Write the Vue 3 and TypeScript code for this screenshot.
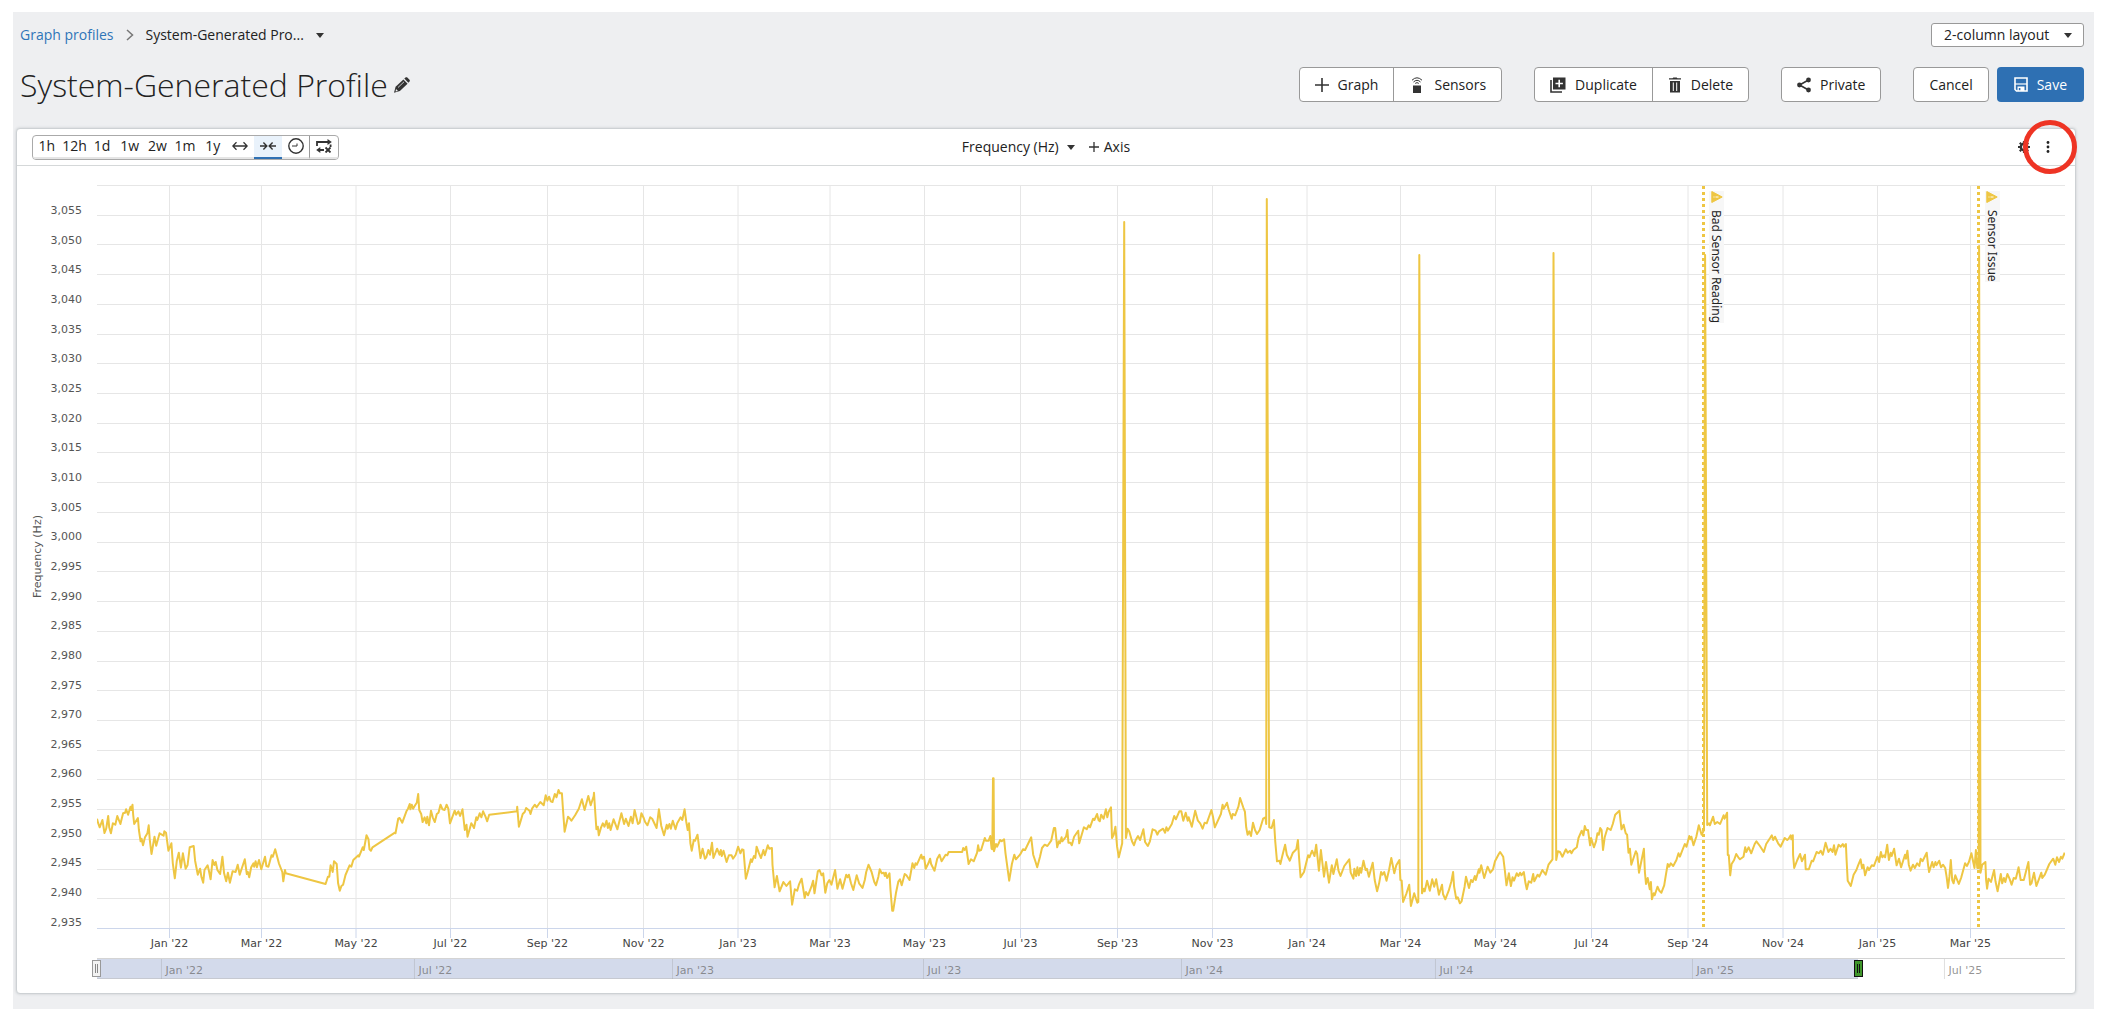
<script setup lang="ts">
import { ref } from 'vue'

const PLOT_W = 1968
const PLOT_H = 743

interface Chunk {
  start: number
  scale: number
  points: string
}

// Samples are stored in quarters of the time range; x counts from the start of each quarter.
const chunks: Chunk[] = [
  {
    start: -97,
    scale: 2.958,
    points:
      '287,236 290,248 295,262 303,240 309,279 314,266 320,228 323,262 328,280 334,250 341,254 347,228 356,252 364,220 370,218 373,208 379,224 386,200 388,210 392,194 394,225 397,252 408,234 411,270 416,304 419,296 423,316 429,292 436,280 440,256 443,300 448,342 457,290 462,317 472,280 484,287 486,274 491,278 498,332 507,310 511,370 517,415 523,362 529,338 535,383 541,340 549,386 555,375 561,322 573,318 577,362 585,404 592,386 596,412 601,428 605,390 614,376 618,392 623,418 629,360 634,375 638,366 643,390 651,402 658,350 663,400 669,424 674,398 680,428 688,394 697,396 703,374 709,404 724,358 730,402 733,396 737,412 743,382 750,370 752,380 756,364 760,382 766,360 773,388 784,350 788,378 794,380 803,346 807,350 814,328 825,370 835,396 838,424 843,390 845,400 963,432 970,410 974,410 978,376 984,396 988,364 996,372 1000,430 1005,452 1010,438 1015,434 1022,405 1034,376 1039,380 1045,360 1060,346 1062,350 1073,322 1076,330 1084,286 1090,298 1093,328 1097,332 1102,322 1168,278 1170,280 1178,236 1182,234 1190,248 1202,214 1207,206 1212,192 1214,208 1218,194 1222,206 1228,196 1233,188 1237,162 1240,210 1246,222 1250,246 1256,232 1261,250 1264,230 1269,256 1275,212 1280,232 1286,246 1292,222 1297,218 1303,194 1309,208 1315,210 1321,194 1326,206 1331,250 1345,212 1349,224 1356,214 1361,228 1368,208 1375,270 1380,254 1383,290 1394,250 1398,256 1402,264 1409,232 1412,240 1419,220 1424,232 1429,214 1436,230 1441,244 1447,224 1529,214 1530,200 1535,260',
  },
  {
    start: 423,
    scale: 2.958,
    points:
      '0,250 8,222 14,216 18,204 28,212 31,222 36,205 44,194 49,202 60,186 70,196 76,166 81,182 86,170 91,184 96,186 103,162 108,172 114,150 118,160 124,160 127,205 132,275 142,230 148,236 152,242 163,226 174,206 183,178 191,210 202,168 209,196 218,168 219,158 222,210 226,268 230,260 233,286 240,262 245,250 250,260 256,242 260,264 264,250 268,270 277,238 288,268 300,220 308,252 313,236 321,258 328,230 333,250 339,210 349,252 354,248 359,220 366,234 370,246 377,256 385,232 391,236 404,264 411,208 418,258 426,286 434,254 437,266 442,252 446,266 452,242 460,268 465,250 475,232 480,240 487,208 492,246 496,270 500,250 504,310 508,332 514,300 518,302 525,284 534,354 540,326 547,356 551,352 557,330 562,344 568,308 572,354 583,326 590,344 594,330 597,348 602,332 611,366 618,346 626,346 630,356 638,344 645,320 652,340 657,328 661,330 668,416 673,398 683,358 686,366 692,348 696,354 700,320 706,338 713,354 720,330 724,346 733,316 737,326 745,324 747,375 753,442 760,408 768,454 779,426 788,438 799,424 805,494 813,448 820,452 825,434 833,416 842,474 846,456 852,466 862,440 867,422 871,460 881,394 886,390 892,406 897,400 903,458 909,430 915,420 921,434 932,390 939,446 947,418 954,446 965,404 969,412 973,404 979,430 986,450 996,406 1003,430 1013,444 1020,420 1024,396 1031,374 1040,396 1048,426 1053,436 1060,410 1064,388 1070,400 1076,398 1079,408 1082,398 1086,414 1093,400 1096,450 1101,512 1104,512 1112,460 1119,425 1124,418 1129,436 1138,402 1143,406 1152,420 1161,370 1166,384 1170,370 1174,374 1187,344 1190,356 1195,350 1200,386 1208,370 1213,356 1216,372 1226,392 1234,356 1241,344 1247,364 1259,344 1264,346 1268,336 1308,336 1311,324 1315,330 1320,320 1327,372 1334,358 1342,364 1352,338 1355,316 1358,332 1364,330 1375,294 1378,302 1386,302 1391,288 1395,326 1397,328 1399,115 1401,115 1402,334 1408,312 1411,320 1416,310 1420,300 1425,304 1432,298 1436,340 1447,422 1455,372 1462,344 1467,358 1479,344 1488,328 1494,330 1512,292 1518,344 1524,362 1530,382',
  },
  {
    start: 943,
    scale: 2.958,
    points:
      '0,350 6,324 14,314 22,318 33,302 41,264 45,264 51,322 56,304 59,310 64,292 66,304 77,290 81,270 84,308 90,308 94,316 101,290 113,272 116,310 130,262 138,268 144,256 148,262 157,236 161,240 169,222 173,240 177,244 181,224 188,236 195,208 199,232 203,216 210,202 213,294 218,284 223,260 228,320 233,352 243,310 249,-1554 254,294 259,266 264,274 272,304 278,316 283,300 290,288 296,300 306,268 311,306 319,318 325,304 333,268 342,272 347,284 352,274 364,266 370,278 374,262 378,272 390,252 397,228 402,238 412,214 418,214 424,242 431,218 437,242 440,232 449,260 459,212 467,242 474,250 481,266 487,248 493,250 507,210 512,232 517,262 535,222 540,194 543,206 553,188 558,208 567,236 570,222 577,226 587,200 592,174 601,202 606,215 610,262 614,284 619,274 624,288 630,248 636,270 642,282 650,270 660,236 667,232 669,252 671,-1623 678,262 685,264 692,240 696,306 701,364 708,362 711,372 716,350 725,314 730,344 739,362 748,338 758,328 763,300 766,350 771,412 781,396 793,346 797,352 805,332 812,348 817,314 825,392 831,330 840,410 846,366 855,428 863,376 868,402 878,358 883,392 889,408 900,378 915,358 919,398 927,416 930,386 935,408 939,382 943,406 947,384 950,398 957,362 963,390 967,386 973,410 984,368 990,420 997,454 1003,430 1009,396 1013,404 1018,396 1025,422 1033,388 1039,354 1048,400 1054,376 1063,360 1066,420 1070,422 1074,486 1084,460 1092,434 1097,498 1107,460 1116,488 1119,486 1122,-1455 1130,460 1135,446 1138,454 1145,422 1153,452 1160,418 1166,440 1172,418 1180,464 1189,434 1192,462 1199,478 1209,452 1217,424 1222,396 1225,440 1231,476 1236,472 1242,490 1247,484 1256,440 1260,410 1269,444 1275,420 1280,426 1286,408 1289,420 1298,388 1300,398 1305,376 1314,414 1324,380 1332,398 1340,388 1346,364 1357,342 1361,336 1370,350 1375,390 1380,436 1387,400 1393,438 1398,412 1402,422 1410,400 1415,408 1420,398 1424,406 1431,396 1436,430 1440,448 1446,424 1453,428 1459,402 1462,424 1472,404 1477,410 1486,390 1496,404 1504,374 1516,358 1519,-1461 1527,360 1532,334',
  },
  {
    start: 1463,
    scale: 2.861,
    points:
      '0,336 7,350 17,328 22,338 29,332 33,340 38,330 48,322 53,294 62,272 67,286 71,258 75,270 80,270 86,316 89,294 97,322 103,304 107,280 111,284 115,264 119,270 123,330 128,292 136,264 145,270 151,252 158,224 170,212 176,268 182,254 188,280 192,284 196,338 200,326 204,374 217,334 221,342 226,398 240,326 243,396 246,432 251,414 257,448 260,426 263,478 268,460 271,466 279,440 284,452 290,458 298,436 302,410 308,372 312,380 317,370 324,378 333,360 339,340 343,350 357,312 362,320 370,288 373,298 376,290 382,316 390,290 397,256 405,284 412,270 415,-1455 421,255 427,250 429,256 438,230 443,252 450,246 458,252 468,226 471,236 478,218 480,345 483,346 487,406 491,372 498,360 504,342 510,352 515,358 525,350 530,322 533,336 540,322 547,340 557,312 562,304 572,318 583,336 590,312 596,302 601,294 606,286 610,300 615,290 624,310 631,320 643,294 650,300 654,296 660,286 662,298 666,286 667,345 670,384 679,360 687,342 692,364 701,344 703,388 712,388 720,362 724,364 734,336 741,340 746,332 752,344 760,308 768,336 774,326 780,336 784,316 788,344 797,314 803,320 809,312 812,320 818,312 820,360 823,422 832,438 840,404 848,390 853,376 860,358 864,384 868,374 873,406 880,382 884,390 892,376 898,378 908,350 913,366 918,336 922,352 927,346 930,352 936,314 941,360 946,338 949,348 956,326 963,376 970,356 976,382 987,344 990,356 994,332 998,374 1003,392 1010,374 1015,384 1022,370 1028,378 1032,356 1037,364 1049,338 1053,376 1056,396 1065,366 1069,382 1074,366 1077,376 1085,362 1090,382 1096,374 1102,384 1106,410 1110,444 1114,410 1118,360 1122,420 1126,430 1131,406 1141,432 1148,412 1159,370 1164,378 1170,366 1177,340 1186,384 1190,330 1194,384 1198,384 1199,-1482 1203,398 1208,374 1217,366 1219,420 1222,446 1226,416 1233,426 1242,390 1246,424 1252,454 1261,402 1265,430 1270,414 1274,426 1280,402 1286,416 1292,434 1298,414 1304,416 1312,382 1318,420 1327,420 1340,366 1345,434 1349,430 1356,398 1363,438 1372,412 1377,398 1380,414 1387,404 1400,372 1411,356 1417,374 1422,352 1428,366 1433,350 1437,356 1444,338',
  },
]

const linePoints = chunks
  .flatMap((c) =>
    c.points.split(' ').map((p) => {
      const [x, y] = p.split(',').map(Number)
      return `${(c.start + x / c.scale).toFixed(1)},${(555 + y / 3).toFixed(1)}`
    }),
  )
  .join(' ')

const pct = (x: number) => `${((x / PLOT_W) * 100).toFixed(3)}%`

const yLabels = Array.from({ length: 25 }, (_, i) => (3055 - i * 5).toLocaleString('en-US'))
const gridRows = Array.from({ length: 25 }, (_, i) => 0.5 + Math.round(i * 29.72))

const months: { x: number; label: string }[] = [
  { x: 72.5, label: "Jan '22" },
  { x: 164.5, label: "Mar '22" },
  { x: 259, label: "May '22" },
  { x: 353.5, label: "Jul '22" },
  { x: 450.5, label: "Sep '22" },
  { x: 546.5, label: "Nov '22" },
  { x: 641, label: "Jan '23" },
  { x: 733, label: "Mar '23" },
  { x: 827.5, label: "May '23" },
  { x: 923.5, label: "Jul '23" },
  { x: 1020.5, label: "Sep '23" },
  { x: 1115.5, label: "Nov '23" },
  { x: 1210, label: "Jan '24" },
  { x: 1303.5, label: "Mar '24" },
  { x: 1398.5, label: "May '24" },
  { x: 1494.5, label: "Jul '24" },
  { x: 1591, label: "Sep '24" },
  { x: 1686, label: "Nov '24" },
  { x: 1780.5, label: "Jan '25" },
  { x: 1873.5, label: "Mar '25" },
]

const navTicks: { x: number; label: string }[] = [
  { x: 64.5, label: "Jan '22" },
  { x: 317.5, label: "Jul '22" },
  { x: 575.5, label: "Jan '23" },
  { x: 826.5, label: "Jul '23" },
  { x: 1084.5, label: "Jan '24" },
  { x: 1338.5, label: "Jul '24" },
  { x: 1595.5, label: "Jan '25" },
  { x: 1847.5, label: "Jul '25" },
]

const events = [
  { x: 1606.5, label: 'Bad Sensor Reading' },
  { x: 1881.5, label: 'Sensor Issue' },
]

const ranges = ['1h', '12h', '1d', '1w', '2w', '1m', '1y']
const layout = ref('2-column layout')
</script>

<template>
  <main class="page">
    <div class="top-row">
      <nav class="crumbs" aria-label="Breadcrumb">
        <a href="#">Graph profiles</a>
        <svg width="8" height="14" viewBox="0 0 8 14"><path d="M1 2l5.500 5L1 12" fill="none" stroke="#777" stroke-width="1.500" /></svg>
        <button type="button" class="plain crumb-current">
          System-Generated Pro...
          <svg width="8" height="5" viewBox="0 0 8 5"><path d="M0 0h8L4 5z" fill="#333" /></svg>
        </button>
      </nav>
      <div class="select-wrap">
        <select v-model="layout" aria-label="Layout">
          <option>2-column layout</option>
        </select>
        <svg width="8" height="5" viewBox="0 0 8 5"><path d="M0 0h8L4 5z" fill="#333" /></svg>
      </div>
    </div>

    <div class="title-row">
      <h1>System-Generated Profile</h1>
      <button type="button" class="plain edit" aria-label="Edit name">
        <svg width="16" height="16" viewBox="0 0 16 16" fill="#333">
          <path d="M1.600 9.800L9.400 2.400l4.200 4.300-7.700 7.400L0 15.800z" />
          <path d="M10.300 1.600l1.200-1.100c.5-.5 1.300-.5 1.800 0L15.500 2.700c.5.5.5 1.300 0 1.800L14.400 5.700z" />
          <path d="M2 12l2 2-2.400.5z" fill="#eeeff1" />
          <path d="M4 10.500L10 4.800" stroke="#eeeff1" stroke-width="0.800" />
        </svg>
      </button>
      <div class="actions">
        <div class="group">
          <button type="button">
            <svg width="14" height="14" viewBox="0 0 14 14"><path d="M7 0v14M0 7h14" stroke="#333" stroke-width="1.600" /></svg>
            Graph
          </button>
          <button type="button">
            <svg width="16" height="16" viewBox="-2 0 16 16">
              <rect x="2" y="8.500" width="8" height="7.500" fill="#333" />
              <path d="M1 3.200Q6-1.600 11 3.200M2.500 5Q6 1.600 9.500 5M4.200 6.400Q6 4.800 7.800 6.400" fill="none" stroke="#333" stroke-width="1" />
            </svg>
            Sensors
          </button>
        </div>
        <div class="group">
          <button type="button">
            <svg width="16" height="16" viewBox="0 0 16 16">
              <path d="M1 3v12h11" fill="none" stroke="#333" stroke-width="1.600" />
              <rect x="3" y="0.500" width="12.500" height="12" fill="#333" />
              <path d="M9.200 2.800v7.400M5.500 6.500h7.400" stroke="#fff" stroke-width="1.600" />
            </svg>
            Duplicate
          </button>
          <button type="button">
            <svg width="14" height="16" viewBox="-1 0 14 16">
              <path d="M0 1.200h3.500L4.300.4h3.400l.8.800H12v1.400H0zM1 4h10v11.500H1z" fill="#333" />
              <path d="M4.300 5.500v8.500M7.700 5.500v8.500" stroke="#fff" stroke-width="1" />
            </svg>
            Delete
          </button>
        </div>
        <div class="group">
          <button type="button">
            <svg width="14" height="16" viewBox="0 0 14 16">
              <path d="M11.500 3L2.500 8l9 5" fill="none" stroke="#333" stroke-width="1.600" />
              <circle cx="11.500" cy="3" r="2.400" fill="#333" /><circle cx="2.500" cy="8" r="2.400" fill="#333" /><circle cx="11.500" cy="13" r="2.400" fill="#333" />
            </svg>
            Private
          </button>
        </div>
        <div class="pair">
          <div class="group"><button type="button">Cancel</button></div>
          <button type="button" class="save">
            <svg width="14" height="15" viewBox="0 0 14 15">
              <path d="M1 1h12v13H2.500L1 12.500z" fill="none" stroke="#fff" stroke-width="1.600" />
              <path d="M1 7h12" stroke="#fff" stroke-width="1.200" />
              <path d="M3.500 9.500h7V14h-7z" fill="#fff" />
              <path d="M4.800 11h1.600v2.200H4.800z" fill="#2e70b3" />
            </svg>
            Save
          </button>
        </div>
      </div>
    </div>

    <section class="card">
      <header class="card-head">
        <div class="ranges">
          <button v-for="r in ranges" :key="r" type="button">{{ r }}</button>
          <button type="button" aria-label="Expand range">
            <svg width="16" height="10" viewBox="0 0 16 10"><path d="M1 5h14M4.500 1.200L.8 5l3.700 3.800M11.500 1.200L15.200 5l-3.700 3.800" fill="none" stroke="#333" stroke-width="1.300" /></svg>
          </button>
          <button type="button" class="active" aria-label="Fit range">
            <svg width="16" height="10" viewBox="0 0 16 10"><path d="M0 5h6.500M9.500 5H16M3.400 1.600L6.800 5 3.400 8.400M12.600 1.600L9.200 5l3.400 3.400" fill="none" stroke="#333" stroke-width="1.400" /></svg>
          </button>
          <button type="button" aria-label="Pick time">
            <svg width="16" height="16" viewBox="0 0 16 16"><circle cx="8" cy="8" r="7.200" fill="none" stroke="#333" stroke-width="1.400" /><path d="M4 8h5V5.500" fill="none" stroke="#333" stroke-width="1" /></svg>
          </button>
          <button type="button" class="last" aria-label="Reset sync">
            <svg width="16" height="14" viewBox="0 0 16 14">
              <path d="M1 7V3h12" fill="none" stroke="#333" stroke-width="1.800" />
              <path d="M11.500 0L15.800 3l-4.300 3z" fill="#333" />
              <path d="M3 11h5M14.600 5.500V8" stroke="#333" stroke-width="1.800" />
              <path d="M4.300 8L.2 11l4.100 3z" fill="#333" />
              <path d="M9.500 8.500l5 5M14.500 8.500l-5 5" stroke="#333" stroke-width="1.800" />
            </svg>
          </button>
        </div>
        <div class="axis-tools">
          <button type="button" class="plain">
            Frequency (Hz)
            <svg width="8" height="5" viewBox="0 0 8 5"><path d="M0 0h8L4 5z" fill="#333" /></svg>
          </button>
          <button type="button" class="plain add-axis">
            <svg width="10" height="10" viewBox="0 0 10 10"><path d="M5 0v10M0 5h10" stroke="#333" stroke-width="1.300" /></svg>
            Axis
          </button>
        </div>
        <div class="card-tools">
          <button type="button" class="plain" aria-label="Settings">
            <svg width="12" height="12" viewBox="0 0 12 12">
              <circle cx="6" cy="6" r="3.200" fill="none" stroke="#333" stroke-width="2.400" />
              <path d="M6 0v2M6 10v2M0 6h2M10 6h2M1.800 1.800l1.400 1.400M8.800 8.800l1.400 1.400M10.200 1.800L8.800 3.200M3.200 8.800l-1.400 1.400" stroke="#333" stroke-width="2.200" />
            </svg>
          </button>
          <button type="button" class="plain more" aria-label="More">
            <svg width="4" height="12" viewBox="0 0 4 12" fill="#222"><circle cx="2" cy="1.500" r="1.400" /><circle cx="2" cy="6" r="1.400" /><circle cx="2" cy="10.500" r="1.400" /></svg>
            <span class="ring"></span>
          </button>
        </div>
      </header>

      <div class="chart">
        <div class="axis-title">Frequency (Hz)</div>
        <div class="y-axis"><span v-for="l in yLabels" :key="l">{{ l }}</span></div>
        <div class="plot-col">
          <div class="plot">
            <svg class="plot-svg" :viewBox="`0 0 ${PLOT_W} ${PLOT_H}`" preserveAspectRatio="none">
              <g stroke="#e6e6e6" stroke-width="1">
                <line v-for="y in gridRows" :key="`r${y}`" x1="0" :x2="PLOT_W" :y1="y" :y2="y" vector-effect="non-scaling-stroke" />
                <line v-for="m in months" :key="m.label" :x1="m.x" :x2="m.x" y1="0" :y2="PLOT_H" vector-effect="non-scaling-stroke" />
              </g>
              <polyline :points="linePoints" fill="none" stroke="#eec643" stroke-width="2" stroke-linejoin="round" vector-effect="non-scaling-stroke" />
              <line v-for="e in events" :key="e.label" :x1="e.x" :x2="e.x" y1="1" :y2="PLOT_H" stroke="#eec643" stroke-width="3" stroke-dasharray="3 3" vector-effect="non-scaling-stroke" />
            </svg>
            <div v-for="e in events" :key="e.label" class="event" :style="{ left: pct(e.x) }">
              <svg width="12" height="12" viewBox="0 0 12 12"><path d="M.8.500L11.200 6 .8 11.500z" fill="#eec643" stroke="#eec643" stroke-linejoin="round" /><path d="M2.500 6h1M4.500 6h3" stroke="#fff" stroke-width="1" /></svg>
              <span>{{ e.label }}</span>
            </div>
          </div>
          <svg class="x-axis" width="100%" height="30">
            <line x1="0" x2="100%" y1="0.500" y2="0.500" stroke="#ccd6eb" />
            <g v-for="m in months" :key="m.label">
              <line :x1="pct(m.x)" :x2="pct(m.x)" y1="0" y2="10" stroke="#ccd6eb" />
              <text :x="pct(m.x)" y="19" text-anchor="middle">{{ m.label }}</text>
            </g>
          </svg>
          <div class="navigator">
            <div class="selected">
              <span class="handle start"></span>
              <span class="handle end"></span>
            </div>
            <svg width="100%" height="20">
              <g v-for="t in navTicks" :key="t.label">
                <line :x1="pct(t.x)" :x2="pct(t.x)" y1="0" y2="20" stroke="#999" stroke-opacity="0.300" />
                <text :x="pct(t.x)" y="15" dx="4">{{ t.label }}</text>
              </g>
            </svg>
          </div>
        </div>
      </div>
    </section>
  </main>
</template>

<style>
body {
  background: #fff;
}
</style>

<style scoped>
.page {
  margin: 12px 14px 12px 13px;
  padding: 11px 10px 15px 7px;
  background: #eeeff1;
  font-family: 'Open Sans', 'Noto Sans', sans-serif;
  font-size: 14px;
  line-height: 20px;
  color: #222;
}
* {
  box-sizing: border-box;
}
svg {
  display: block;
  flex: none;
}
button,
select {
  font: inherit;
  color: inherit;
  margin: 0;
}
.plain {
  display: flex;
  align-items: center;
  padding: 0;
  border: 0;
  background: none;
}
.top-row,
.title-row {
  display: flex;
  align-items: center;
}
.top-row {
  justify-content: space-between;
}
.crumbs {
  display: flex;
  align-items: center;
  gap: 12px;
}
.crumbs a {
  color: #2e75b8;
  text-decoration: none;
}
.crumb-current {
  gap: 12px;
}
.select-wrap {
  position: relative;
}
.select-wrap select {
  display: block;
  width: 153px;
  height: 24px;
  padding: 0 12px;
  appearance: none;
  border: 1px solid #999;
  border-radius: 3px;
  background: #fff;
}
.select-wrap svg {
  position: absolute;
  right: 12px;
  top: 10px;
  pointer-events: none;
}
.title-row {
  margin-top: 20px;
}
h1 {
  margin: 0;
  font-weight: 300;
  font-size: 32px;
  line-height: 34px;
}
.edit {
  margin-left: 6px;
}
.actions {
  display: flex;
  gap: 32px;
  margin-left: auto;
}
.pair {
  display: flex;
  gap: 8px;
}
.group {
  display: flex;
  border: 1px solid #999;
  border-radius: 4px;
  background: #fff;
  overflow: hidden;
}
.group button,
.save {
  display: flex;
  align-items: center;
  gap: 9px;
  padding: 0 15px;
  border: 0;
  background: none;
}
.group button {
  height: 33px;
}
.group button + button {
  border-left: 1px solid #999;
}
.save {
  padding: 0 17px;
  border-radius: 4px;
  background: #2e70b3;
  color: #fff;
}
.card {
  margin: 26px 8px 0 -4px;
  border: 1px solid #cdd1d4;
  border-radius: 4px;
  background: #fff;
  box-shadow: 0 0 3px #c5cacd;
}
.card-head {
  display: grid;
  grid-template-columns: 1fr auto 1fr;
  align-items: center;
  height: 37px;
  padding: 0 15px;
  border-bottom: 1px solid #d5d8d9;
}
.ranges {
  display: flex;
  width: 307px;
  height: 25px;
  border: 1px solid #aaa;
  border-radius: 4px;
  overflow: hidden;
}
.ranges button {
  display: flex;
  flex: 1 1 0;
  align-items: center;
  justify-content: center;
  min-width: 0;
  padding: 0;
  border: 0;
  border-bottom: 2px solid #e5e5e5;
  background: none;
}
.ranges .active {
  border-color: #2e70b3;
  background: #e9f2fb;
}
.ranges .last {
  border-left: 1px solid #999;
}
.axis-tools {
  display: flex;
  gap: 14px;
}
.axis-tools .plain {
  gap: 8px;
}
.axis-tools .add-axis {
  gap: 5px;
}
.card-tools {
  display: flex;
  justify-content: flex-end;
  gap: 16px;
  padding-right: 10px;
}
.more {
  position: relative;
}
.ring {
  position: absolute;
  left: -23px;
  top: -21px;
  width: 54px;
  height: 54px;
  border: 5px solid #ee3424;
  border-radius: 50%;
}
.chart {
  display: flex;
  padding: 19px 10px 14px 14px;
}
.axis-title,
.y-axis,
.x-axis text,
.navigator text {
  font-family: 'DejaVu Sans', sans-serif;
  font-size: 11px;
}
.axis-title {
  display: flex;
  align-items: center;
  justify-content: center;
  width: 14px;
  height: 743px;
  writing-mode: vertical-rl;
  transform: rotate(180deg);
  line-height: 14px;
  color: #555;
}
.y-axis {
  display: flex;
  flex-direction: column;
  justify-content: space-between;
  width: 37px;
  height: 745px;
  padding-top: 19px;
  margin-right: 15px;
  text-align: right;
  line-height: 14px;
  color: #555;
}
.plot-col {
  flex: 1;
  min-width: 0;
}
.plot {
  position: relative;
}
.plot-svg {
  width: 100%;
  height: 743px;
}
.event {
  position: absolute;
  top: 6px;
  display: flex;
  flex-direction: column;
  align-items: center;
  gap: 7px;
  margin-left: 6px;
  width: 15px;
  background: #f7f7f7;
  font-family: 'Noto Sans', sans-serif;
  font-size: 12px;
  line-height: 15px;
}
.event span {
  writing-mode: vertical-rl;
  white-space: nowrap;
}
.x-axis text {
  fill: #444;
}
.navigator {
  position: relative;
  border-top: 1px solid #d4d4d4;
}
.navigator text {
  fill: #666;
  fill-opacity: 0.7;
}
.selected {
  position: absolute;
  left: 0;
  top: 0;
  width: 89.5%;
  height: 20px;
  border-bottom: 1px solid #c6c9d1;
  background: #d3daeb;
}
.navigator > svg {
  position: relative;
}
.handle {
  position: absolute;
  top: 1px;
  z-index: 1;
  width: 9px;
  height: 17px;
  border: 1px solid #999;
  background: linear-gradient(90deg, transparent 2px, #888 2px, #888 3px, transparent 3px, transparent 4px, #888 4px, #888 5px, transparent 5px) 0 3px / 7px 9px no-repeat #f2f2f2;
}
.handle.start {
  left: -5px;
}
.handle.end {
  right: -5px;
  border-color: #111;
  background: linear-gradient(90deg, transparent 2px, #111 2px, #111 3px, transparent 3px, transparent 4px, #111 4px, #111 5px, transparent 5px) 0 3px / 7px 9px no-repeat #3f962b;
}
</style>
